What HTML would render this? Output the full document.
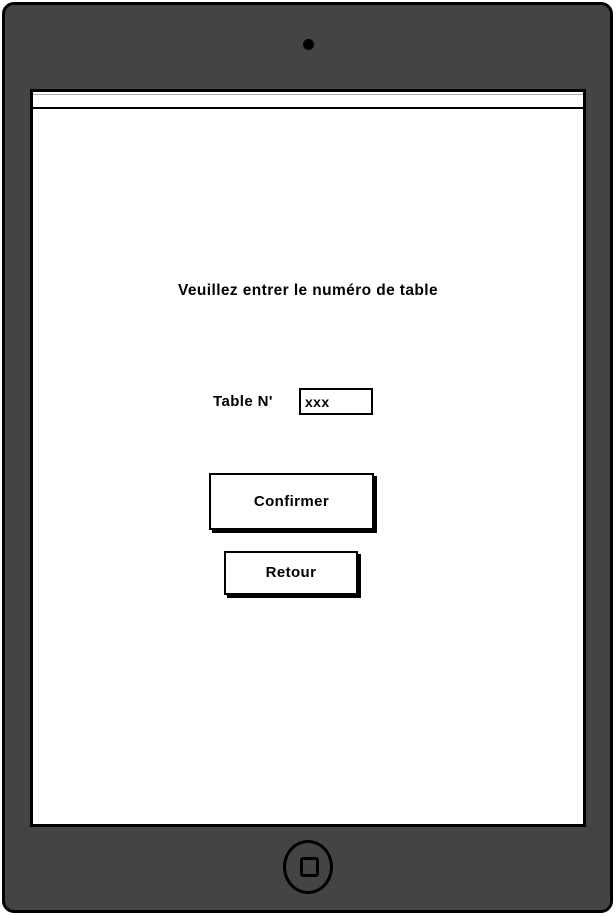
<!DOCTYPE html>
<html><head><meta charset="utf-8"><style>
body{margin:0;width:616px;height:916px;background:#fff;position:relative;overflow:hidden;font-family:"Liberation Sans",sans-serif;}
.dev{position:absolute;left:2px;top:2px;width:605px;height:905px;background:#444;border:3px solid #000;border-radius:12px;}
.cam{position:absolute;left:303px;top:39px;width:11px;height:11px;border-radius:50%;background:#000;}
.scr{position:absolute;left:30px;top:89px;width:550px;height:732px;border:3px solid #000;background:#fff;}
.bar{position:absolute;left:33px;top:94px;width:550px;height:12px;border-bottom:2px solid #000;border-top:1px solid #aaa;background:#fff;}
.home{position:absolute;left:283px;top:840px;width:44px;height:48px;border:3px solid #000;border-radius:50%;}
.sq{position:absolute;left:300px;top:857px;width:13px;height:14px;border:3px solid #000;border-radius:3px;}
.t{position:absolute;font-weight:bold;color:#000;font-size:15px;letter-spacing:0.4px;}
.box{position:absolute;background:#fff;border:2px solid #000;box-shadow:3px 3px 0 #000;}
</style></head><body>
<div class="dev"></div>
<div class="cam"></div>
<div class="scr"></div>
<div class="bar"></div>
<div class="home"></div>
<div class="sq"></div>
<div class="t" style="left:170px;top:282px;width:276px;text-align:center;font-size:15.5px;">Veuillez entrer le numéro de table</div>
<div class="t" style="left:213px;top:393px;">Table N'</div>
<div style="position:absolute;left:299px;top:388px;width:70px;height:23px;border:2px solid #000;"></div>
<div class="t" style="left:305px;top:394px;font-size:14px;">xxx</div>
<div class="box" style="left:209px;top:473px;width:161px;height:53px;"></div>
<div class="t" style="left:209px;top:493px;width:165px;text-align:center;">Confirmer</div>
<div class="box" style="left:224px;top:551px;width:130px;height:40px;"></div>
<div class="t" style="left:224px;top:564px;width:134px;text-align:center;">Retour</div>
</body></html>
